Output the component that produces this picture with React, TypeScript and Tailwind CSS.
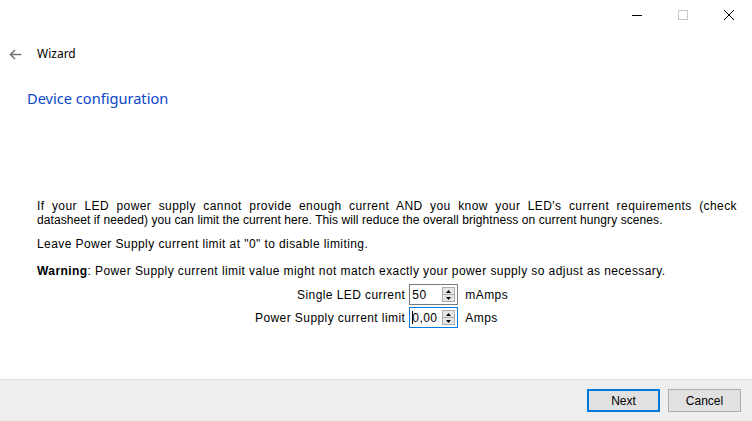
import React from "react";

function SpinBox({ value, focused }: { value: string; focused?: boolean }) {
  return (
    <div
      className={`relative flex items-center w-[49px] h-[21px] border bg-white ${
        focused ? "border-[#0078d7]" : "border-[#7a7a7a]"
      }`}
    >
      <div className="flex items-center pl-[2px] text-[12px] leading-none text-black">
        {focused && <span className="inline-block w-px h-[13px] bg-black mr-[-1px]" />}
        <span>{value}</span>
      </div>
      <div className="absolute right-[2px] top-[2px] bottom-[2px] w-[13px] flex flex-col border border-[#adadad] bg-[#e5e5e5]">
        <div className="flex-1 flex items-center justify-center">
          <svg width="5" height="3" viewBox="0 0 5 3">
            <polygon points="2.5,0 5,3 0,3" fill="#000" />
          </svg>
        </div>
        <div className="h-px bg-[#adadad]" />
        <div className="flex-1 flex items-center justify-center">
          <svg width="5" height="3" viewBox="0 0 5 3">
            <polygon points="0,0 5,0 2.5,3" fill="#000" />
          </svg>
        </div>
      </div>
    </div>
  );
}

export default function App() {
  return (
    <div
      className="w-[752px] h-[421px] bg-white flex flex-col overflow-hidden text-black"
      style={{ fontFamily: '"Liberation Sans", Arial, sans-serif' }}
    >
      {/* Title bar */}
      <div className="h-[30px] flex justify-end">
        <div className="w-[46px] flex items-center justify-center">
          <div className="w-[10px] h-px bg-black" />
        </div>
        <div className="w-[46px] flex items-center justify-center">
          <div className="w-[10px] h-[10px] border border-[#c8c8c8]" />
        </div>
        <div className="w-[46px] flex items-center justify-center">
          <svg width="12" height="12" viewBox="0 0 12 12">
            <path d="M1 1 L11 11 M11 1 L1 11" stroke="#000" strokeWidth="1" />
          </svg>
        </div>
      </div>

      {/* Nav row */}
      <div
        className="h-[20px] mt-[14px] flex items-center text-[12px]"
        style={{ fontFamily: '"Noto Sans", "Open Sans", sans-serif' }}
      >
        <div className="w-[37px] flex items-center pl-[9px]">
          <svg width="13" height="11" viewBox="0 0 13 11">
            <path d="M6 1 L1.5 5.5 L6 10 M1.5 5.5 L12.5 5.5" stroke="#777" strokeWidth="1.6" fill="none" />
          </svg>
        </div>
        <span className="leading-none">Wizard</span>
      </div>

      {/* Title */}
      <div
        className="mt-[24px] pl-[27px] text-[14.6px] leading-[20px] text-[#0a46c8]"
        style={{ fontFamily: '"Noto Sans", "Open Sans", sans-serif' }}
      >
        Device configuration
      </div>

      {/* Content */}
      <div className="mt-[91px] pr-[15px] pl-[37px] text-[12px] leading-[14px] tracking-[0.42px]">
        <div>
          <p className="text-justify whitespace-nowrap" style={{ textAlignLast: "justify" }}>
            If your LED power supply cannot provide enough current AND you know your LED's current requirements (check
          </p>
          <p className="tracking-[0.08px]">
            datasheet if needed) you can limit the current here. This will reduce the overall brightness on current
            hungry scenes.
          </p>
        </div>
        <p className="mt-[10px]">Leave Power Supply current limit at "0" to disable limiting.</p>
        <p className="mt-[13px]">
          <span className="font-bold">Warning</span>: Power Supply current limit value might not match exactly your
          power supply so adjust as necessary.
        </p>

        <div className="mt-[6px] ml-[218px] grid grid-cols-[auto_auto_auto] gap-x-[4px] gap-y-[2px] items-center w-max">
          <div className="text-right">Single LED current</div>
          <SpinBox value="50" />
          <div className="pl-[3px]">mAmps</div>
          <div className="text-right">Power Supply current limit</div>
          <SpinBox value="0,00" focused />
          <div className="pl-[3px]">Amps</div>
        </div>
      </div>

      <div className="flex-1" />

      {/* Footer */}
      <div className="h-[42px] border-t border-[#dfdfdf] bg-[#eeeeee] flex items-center justify-end gap-[8px] pr-[11px]">
        <button className="w-[73px] h-[23px] border-2 border-[#0078d7] bg-[#e1e1e1] text-[12px] leading-none">
          Next
        </button>
        <button className="w-[73px] h-[23px] border border-[#adadad] bg-[#e1e1e1] text-[12px] leading-none">
          Cancel
        </button>
      </div>
    </div>
  );
}
